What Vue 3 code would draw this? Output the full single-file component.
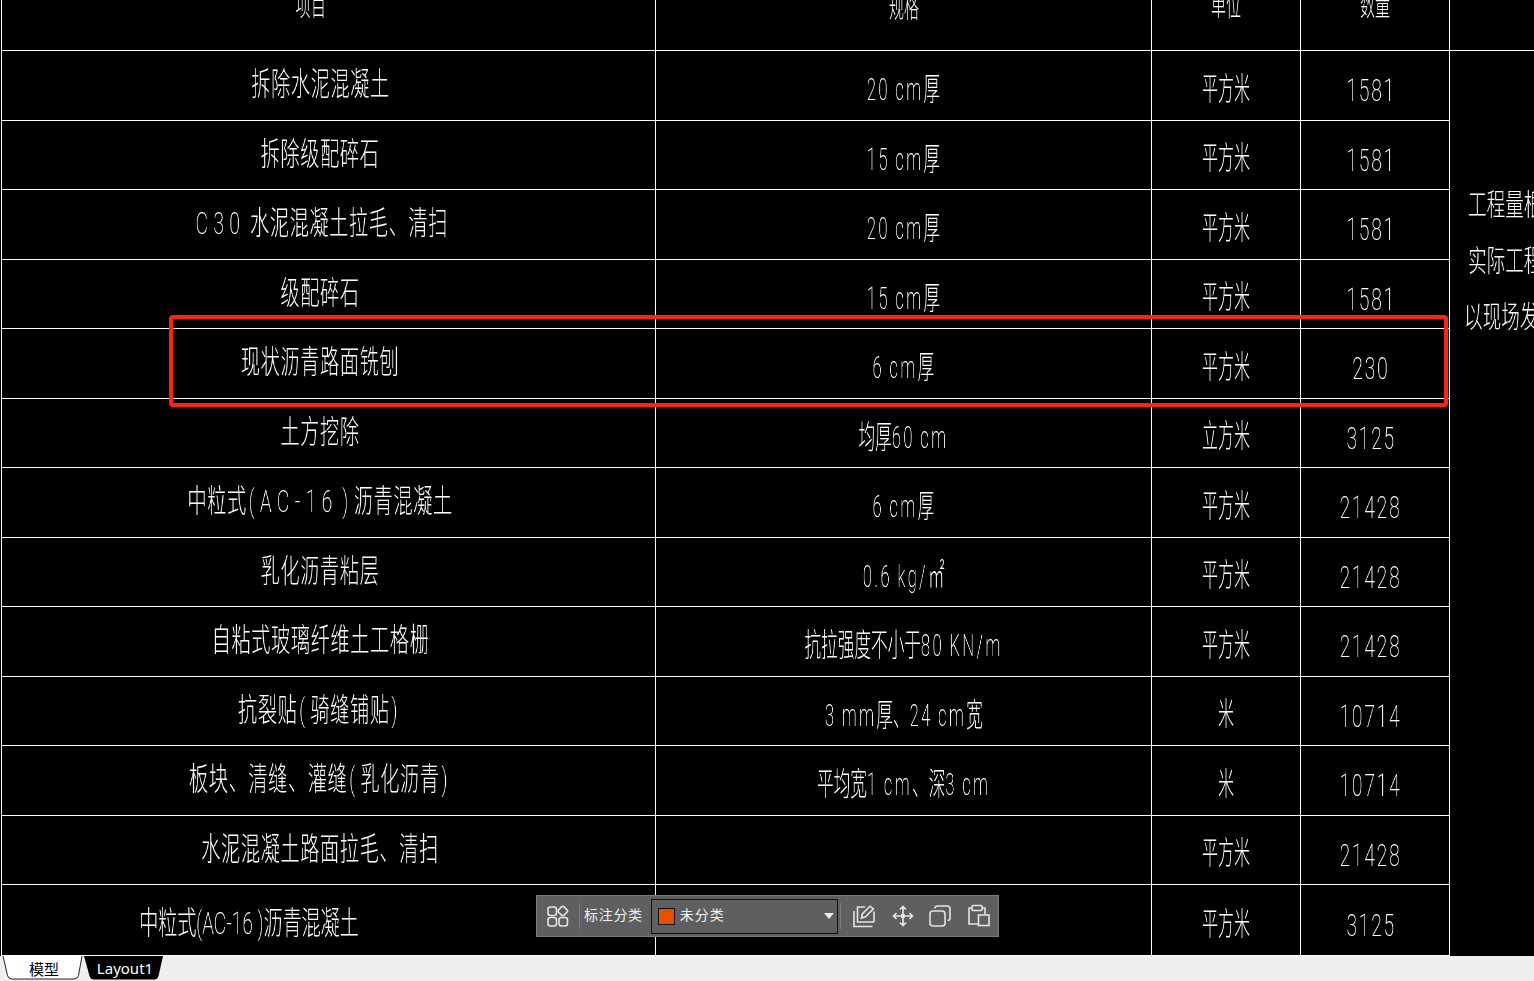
<script setup>
const header = ['项目', '规格', '单位', '数量']
const rows = [
  ['拆除水泥混凝土', '20 cm厚', '平方米', '1581'],
  ['拆除级配碎石', '15 cm厚', '平方米', '1581'],
  ['C30 水泥混凝土拉毛、清扫', '20 cm厚', '平方米', '1581'],
  ['级配碎石', '15 cm厚', '平方米', '1581'],
  ['现状沥青路面铣刨', '6 cm厚', '平方米', '230'],
  ['土方挖除', '均厚60 cm', '立方米', '3125'],
  ['中粒式(AC-16 )沥青混凝土', '6 cm厚', '平方米', '21428'],
  ['乳化沥青粘层', '0.6 kg/㎡', '平方米', '21428'],
  ['自粘式玻璃纤维土工格栅', '抗拉强度不小于80 KN/m', '平方米', '21428'],
  ['抗裂贴(骑缝铺贴)', '3 mm厚、24 cm宽', '米', '10714'],
  ['板块、清缝、灌缝(乳化沥青)', '平均宽1 cm、深3 cm', '米', '10714'],
  ['水泥混凝土路面拉毛、清扫', '', '平方米', '21428'],
  ['中粒式(AC-16 )沥青混凝土', '', '平方米', '3125'],
]
const note = ['工程量根据', '实际工程量', '以现场发生为准']
// Latin runs are spaced wider than the CJK text, as in the CAD drawing font.
const parts = (t) => t.split(/([\x20-\x7e]+)/).filter(Boolean)
const isLatin = (p) => /^[\x20-\x7e]/.test(p)
</script>

<template>
  <div class="page">
    <div class="sheet">
      <div class="table">
        <div v-for="(h, i) in header" :key="h" class="cell head" :class="'c' + i">
          <span class="txt">{{ h }}</span>
        </div>
        <div class="cell head last"></div>
        <template v-for="(r, ri) in rows" :key="ri">
          <div
            v-for="(t, ci) in r"
            :key="ci"
            class="cell"
            :class="['c' + ci, ri === rows.length - 1 ? 'bottom' : '']"
          >
            <span class="txt"><span v-for="(p, pi) in parts(t)" :key="pi" :class="{ lat: isLatin(p) }">{{ p }}</span></span>
          </div>
        </template>
        <div class="merged">
          <span v-for="n in note" :key="n" class="txt note">{{ n }}</span>
        </div>
      </div>

      <div class="mark"></div>

      <div class="toolbar">
        <svg class="ic first" width="22" height="22" viewBox="0 0 22 22" fill="none" stroke="#e4e4e4" stroke-width="1.6">
          <rect x="1" y="2" width="8.5" height="8.5" rx="2.5" />
          <rect x="12" y="2.2" width="7.6" height="7.6" rx="1.8" transform="rotate(45 15.8 6)" />
          <rect x="1" y="12.5" width="8.5" height="8.5" rx="2.5" />
          <rect x="12" y="12.5" width="8.5" height="8.5" rx="2.5" />
        </svg>
        <i class="sep"></i>
        <span class="label">标注分类</span>
        <div class="select">
          <i class="swatch"></i>
          <span class="label">未分类</span>
          <i class="caret"></i>
        </div>
        <i class="sep"></i>
        <svg class="ic" width="24" height="24" viewBox="0 0 24 24" fill="none" stroke="#e4e4e4" stroke-width="1.6">
          <path d="M13 3H5.500v15H22M2 7v15.500h18.500" />
          <path d="M22 7.500V18M9.500 14l.8-4L18 2.200l3.400 2.600-8 8z" />
        </svg>
        <svg class="ic" width="22" height="22" viewBox="0 0 22 22" fill="none" stroke="#e4e4e4" stroke-width="1.6">
          <path d="M11 2v18M2 11h18M8 4.500 11 1.500l3 3M8 17.500l3 3 3-3M4.500 8l-3 3 3 3M17.500 8l3 3-3 3" />
          <circle cx="11" cy="11" r="1.500" fill="#e4e4e4" />
        </svg>
        <svg class="ic" width="22" height="22" viewBox="0 0 22 22" fill="none" stroke="#e4e4e4" stroke-width="1.6">
          <rect x="1" y="6" width="15" height="15" rx="3" />
          <path d="M6 3.500C6 2 7 1 8.500 1H18c1.700 0 3 1.300 3 3v9c0 1.500-1 2.500-2.500 2.500" />
        </svg>
        <svg class="ic" width="24" height="24" viewBox="0 0 24 24" fill="none" stroke="#e4e4e4" stroke-width="1.6">
          <path d="M11 20H2V4h3M15 4h3v6" />
          <rect x="5" y="1.500" width="10" height="5" rx="1" />
          <rect x="11.500" y="11" width="10.500" height="10.500" />
        </svg>
      </div>
    </div>

    <div class="tabs">
      <div class="tab active">
        <svg class="shape" width="82" height="24" viewBox="0 0 82 24">
          <path d="M1 0 5.500 19.500Q6.500 23 10 23H72Q75.500 23 76.500 19.500L80 0" fill="#fff" stroke="#222" stroke-width="1" />
        </svg>
        <span class="tab-txt">模型</span>
      </div>
      <div class="tab dark">
        <svg class="shape" width="82" height="24" viewBox="0 0 82 24">
          <path d="M0 0H79L74.500 20Q73.500 23.500 70 23.500H10Q6.500 23.500 5.500 20Z" fill="#000" />
        </svg>
        <span class="tab-txt">Layout1</span>
      </div>
    </div>
  </div>
</template>

<style>
html, body { margin: 0; background: #efefef; }
</style>

<style scoped>
.page {
  width: 1534px;
  height: 981px;
  display: flex;
  flex-direction: column;
  overflow: hidden;
  background: #efefef;
}
.sheet {
  position: relative;
  height: 956px;
  flex: none;
  background: #000;
  overflow: hidden;
}
.table {
  display: grid;
  padding-left: 1px;
  grid-template-columns: 655px 496px 149px 149px 84px;
  grid-template-rows: 51px repeat(12, 69.5px) 71px;
  color: #fff;
  font-family: Roboto, "Noto Sans CJK SC", sans-serif;
  font-weight: 200;
}
.cell {
  display: flex;
  align-items: center;
  justify-content: center;
  border-right: 1px solid #fff;
  border-bottom: 1px solid #fff;
  white-space: nowrap;
  min-width: 0;
  box-sizing: border-box;
}
.cell.c0 { border-left: 1px solid #fff; padding-right: 16px; padding-bottom: 2px; }
.cell.c0 .txt { letter-spacing: 1px; }
.cell.c0 .lat { letter-spacing: 9px; word-spacing: -9px; padding-left: 3px; }
.cell.c1 { padding-top: 8px; }
.cell.c1 .txt { transform: scaleX(.52); }
.cell.c1 .lat { letter-spacing: 4.600px; word-spacing: -2px; }
.cell.c2 { padding-top: 7px; }
.cell.c2 .txt { transform: scaleX(.5); }
.cell.c3 { padding-top: 10px; padding-right: 8px; }
.cell.c3 .lat { letter-spacing: 3px; }
.cell.c0.bottom { padding-right: 160px; padding-top: 6px; padding-bottom: 0; }
.cell.c0.bottom .txt { letter-spacing: -.3px; }
.cell.c0.bottom .lat { letter-spacing: 0; word-spacing: 0; padding-left: 0; }
.cell.head { align-items: flex-start; padding-top: 0; padding-bottom: 0; }
.cell.head .txt { margin-top: -15px; font-size: 30px; transform: scaleX(.5); }
.cell.head.c0 { padding-right: 36px; }
.cell.head.c3 { padding-right: 0; }
.cell.head.c1 { padding-top: 2px; }
.cell.last { border-right: 0; }
.txt {
  display: inline-block;
  font-size: 32px;
  line-height: 40px;
  transform: scaleX(.6);
  will-change: transform;
}
.merged {
  grid-column: 5;
  grid-row: 2 / span 13;
  display: flex;
  flex-direction: column;
  align-items: flex-start;
  gap: 16px;
  padding: 134px 0 0 18px;
  overflow: hidden;
  white-space: nowrap;
}
.note {
  font-size: 30px;
  transform-origin: 0 50%;
  transform: scaleX(.62);
}
.note:last-child { margin-left: -4px; }
.mark {
  position: absolute;
  left: 169px;
  top: 315px;
  width: 1279px;
  height: 92px;
  box-sizing: border-box;
  border: 4px solid #fa2418;
  border-radius: 4px;
}
.toolbar {
  position: absolute;
  left: 536px;
  top: 895px;
  width: 463px;
  height: 42px;
  box-sizing: border-box;
  background: #5f5f5f;
  border: 1px solid #7d7d7d;
  display: flex;
  align-items: center;
  font-family: "Noto Sans CJK SC", sans-serif;
}
.ic { flex: none; }
.ic.first { margin: 0 0 0 10px; }
.sep {
  width: 1px;
  height: 26px;
  background: #7d7d7d;
  flex: none;
}
.toolbar > .sep:nth-of-type(1) { margin: 0 4px 0 10px; }
.toolbar > .sep:nth-of-type(2) { margin: 0 11px 0 2px; }
.toolbar > svg:nth-of-type(2) { margin-right: 16px; }
.toolbar > svg:nth-of-type(3) { margin-right: 15px; }
.toolbar > svg:nth-of-type(4) { margin-right: 16px; }
.label {
  font-size: 14px;
  line-height: 20px;
  letter-spacing: .7px;
  padding-bottom: 4px;
  color: #f0f0f0;
  white-space: nowrap;
}
.select {
  width: 187px;
  height: 35px;
  box-sizing: border-box;
  margin-left: 8px;
  border: 1px solid #111;
  display: flex;
  align-items: center;
  padding-left: 6px;
  flex: none;
}
.swatch {
  width: 17px;
  height: 17px;
  box-sizing: border-box;
  background: #e65100;
  border: 1px solid #111;
  margin-right: 5px;
}
.select .label { font-size: 14px; letter-spacing: 1px; }
.caret {
  margin-left: auto;
  margin-right: 3px;
  width: 0;
  height: 0;
  border-left: 5px solid transparent;
  border-right: 5px solid transparent;
  border-top: 6px solid #f0f0f0;
}
.tabs {
  display: flex;
  padding-left: 2px;
  gap: 0;
}
.tab {
  position: relative;
  width: 82px;
  height: 24px;
  display: flex;
  align-items: center;
  justify-content: center;
  font-family: "Noto Sans CJK SC", sans-serif;
  font-size: 15px;
}
.shape { position: absolute; inset: 0; }
.tab-txt { position: relative; }
.active { color: #000; }
.active .tab-txt { left: 1px; }
.dark { color: #fff; font-family: "Noto Sans", "Noto Sans CJK SC", sans-serif; font-size: 15px; }
</style>
